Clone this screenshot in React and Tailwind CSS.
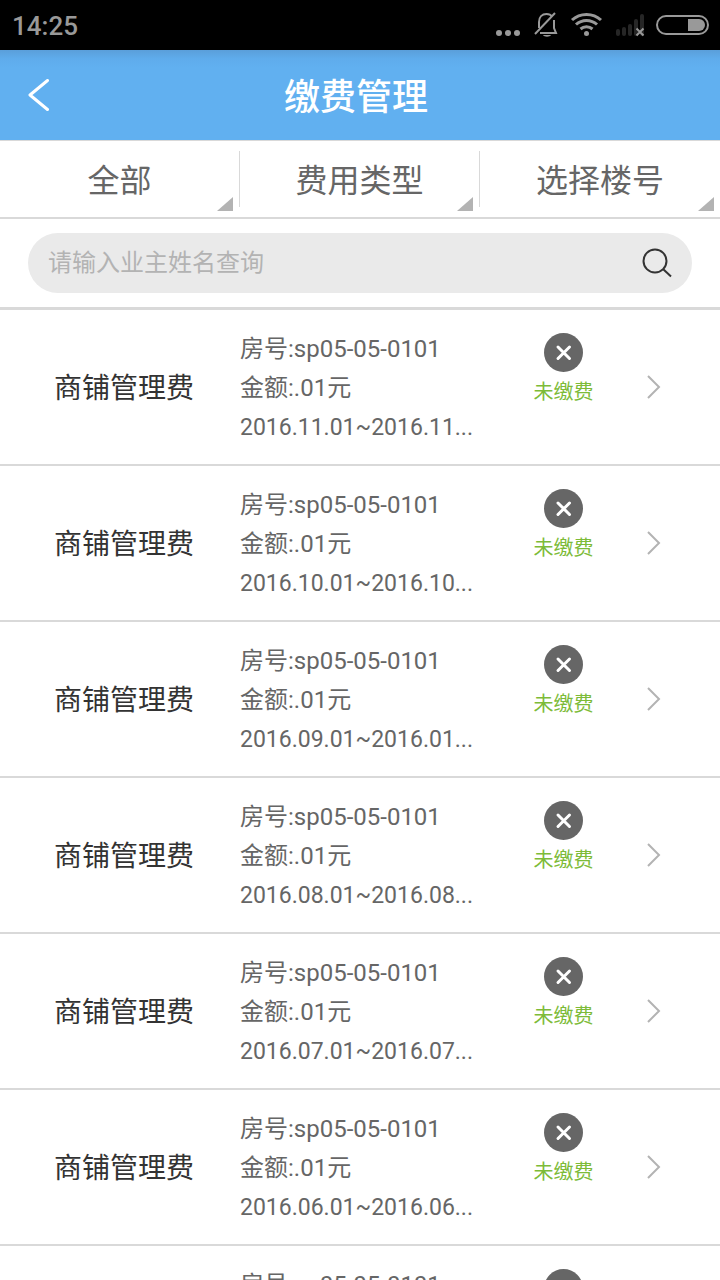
import React, { useState } from 'react';

const FILTERS = [
  { id: 'status', label: '缴费状态', options: ['全部', '已缴费', '未缴费'] },
  { id: 'type', label: '费用类型', options: ['费用类型', '商铺管理费'] },
  { id: 'building', label: '楼号', options: ['选择楼号', 'sp05'] },
];

const BILLS = [
  { id: 1, name: '商铺管理费', room: 'sp05-05-0101', amount: '.01', period: '2016.11.01~2016.11...' },
  { id: 2, name: '商铺管理费', room: 'sp05-05-0101', amount: '.01', period: '2016.10.01~2016.10...' },
  { id: 3, name: '商铺管理费', room: 'sp05-05-0101', amount: '.01', period: '2016.09.01~2016.01...' },
  { id: 4, name: '商铺管理费', room: 'sp05-05-0101', amount: '.01', period: '2016.08.01~2016.08...' },
  { id: 5, name: '商铺管理费', room: 'sp05-05-0101', amount: '.01', period: '2016.07.01~2016.07...' },
  { id: 6, name: '商铺管理费', room: 'sp05-05-0101', amount: '.01', period: '2016.06.01~2016.06...' },
  { id: 7, name: '商铺管理费', room: 'sp05-05-0101', amount: '.01', period: '2016.05.01~2016.05...' },
];

function StatusBar() {
  return (
    <div className="h-[50px] shrink-0 bg-black text-[#999999] flex items-center justify-between pl-3 pr-[11px]">
      <span className="pt-[2px] text-[26px] font-medium">14:25</span>
      {/* dots, muted bell, wifi, no signal, battery */}
      <svg width="213" height="26" viewBox="0 0 213 26" fill="none" aria-hidden="true">
        <g fill="currentColor">
          <circle cx="3" cy="21" r="3" />
          <circle cx="12" cy="21" r="3" />
          <circle cx="21" cy="21" r="3" />
        </g>
        <g stroke="currentColor" strokeWidth="2">
          <path d="M43 16V10C43 5 46 2 50.500 2C53 2 55 3 56 4.500M58 8V16L60 21H44" />
          <path d="M39 22L59 1" />
        </g>
        <path d="M47 23H55C54 25.300 48 25.300 47 23Z" fill="currentColor" />
        <g stroke="currentColor" strokeWidth="3">
          <path d="M76 8C84 0.500 97 0.500 105 8" />
          <path d="M80 12.500C86 7 95 7 101 12.500" />
          <path d="M84.500 17C88 14 93 14 96.500 17" />
        </g>
        <circle cx="90.500" cy="21.500" r="2.500" fill="currentColor" />
        <g fill="#262626">
          <rect x="120" y="17" width="4" height="7" rx="2" />
          <rect x="126" y="15" width="4" height="9" rx="2" />
          <rect x="132" y="12" width="4" height="12" rx="2" />
          <rect x="138" y="7" width="4" height="17" rx="2" />
          <rect x="144" y="2" width="4" height="22" rx="2" />
        </g>
        <path d="M140.500 16.500L147.500 23.500M147.500 16.500L140.500 23.500" stroke="currentColor" strokeWidth="2" />
        <rect x="161" y="4" width="51" height="18" rx="9" stroke="currentColor" strokeWidth="2" />
        <path d="M192 7H203A6 6 0 0 1 203 19H192Z" fill="currentColor" />
      </svg>
    </div>
  );
}

function Header() {
  return (
    <header className="h-[90px] shrink-0 flex items-center bg-[#61b0f0] bg-linear-to-b from-[#5a9fda] via-[#5facec] via-10% to-[#61b0f0] to-20% text-white">
      <button type="button" aria-label="返回" className="w-[72px] h-full pl-7 flex items-center">
        <svg width="22" height="32" viewBox="0 0 22 32" fill="none" stroke="currentColor" strokeWidth="3" strokeLinecap="round" strokeLinejoin="round">
          <path d="M19.500 1.500L2 16L19.500 30.500" />
        </svg>
      </button>
      <h1 className="flex-1 pt-[6px] text-center text-[36px] font-medium">缴费管理</h1>
      <div className="w-20" />
    </header>
  );
}

function FilterTab({ filter, value, onChange, last }) {
  return (
    <div className="relative flex-1 py-[10px]">
      <select
        aria-label={filter.label}
        value={value}
        onChange={(e) => onChange(filter.id, e.target.value)}
        className={`w-full h-14 pt-1 appearance-none bg-transparent text-center text-[32px] text-[#666666] outline-none border-[#d9d9d9] ${last ? '' : 'border-r'}`}
      >
        {filter.options.map((option) => (
          <option key={option}>{option}</option>
        ))}
      </select>
      <svg
        width="16"
        height="14"
        viewBox="0 0 16 14"
        aria-hidden="true"
        className={`absolute bottom-[6px] pointer-events-none ${last ? 'right-[6px]' : 'right-[7px]'}`}
      >
        <path d="M16 0V14H0Z" fill="#b3b3b3" />
      </svg>
    </div>
  );
}

function BillRow({ bill }) {
  return (
    <li className="border-b-2 border-[#d9d9d9]">
      <a href="#" className="flex items-center h-[154px] text-[#666666]">
        <h2 className="w-1/3 pl-2 pt-1 text-center text-[28px] text-[#333333]">{bill.name}</h2>
        <div className="w-1/3 pt-[2px] text-[24px] leading-[39px] whitespace-nowrap">
          <p>房号:{bill.room}</p>
          <p>金额:{bill.amount}元</p>
          <p className="text-[23px] leading-[39px]">{bill.period}</p>
        </div>
        <div className="flex-1 self-start pt-[23px] flex flex-col items-center">
          <svg width="39" height="39" viewBox="0 0 39 39" aria-hidden="true">
            <circle cx="19.500" cy="19.500" r="19.500" fill="#666666" />
            <path d="M14 14L25.500 25.500M25.500 14L14 25.500" stroke="white" strokeWidth="3" strokeLinecap="round" />
          </svg>
          <span className="text-[20px] leading-[40px] text-[#7dbb38]">未缴费</span>
        </div>
        <svg width="14" height="24" viewBox="0 0 14 24" fill="none" stroke="#b3b3b3" strokeWidth="2" aria-hidden="true" className="mr-[59px]">
          <path d="M1 1L12 12L1 23" />
        </svg>
      </a>
    </li>
  );
}

export default function App() {
  const [filters, setFilters] = useState({ status: '全部', type: '费用类型', building: '选择楼号' });
  const [keyword, setKeyword] = useState('');

  const handleFilterChange = (id, value) => {
    setFilters((prev) => ({ ...prev, [id]: value }));
  };

  const bills = BILLS.filter((bill) => !keyword || bill.name.includes(keyword));

  return (
    <div className="h-screen flex flex-col overflow-hidden bg-white font-[Roboto,'Noto_Sans_CJK_SC',sans-serif]">
      <StatusBar />
      <Header />

      {/* Filters */}
      <div className="flex shrink-0 border-t border-b-2 border-[#d9d9d9]">
        {FILTERS.map((filter, i) => (
          <FilterTab
            key={filter.id}
            filter={filter}
            value={filters[filter.id]}
            onChange={handleFilterChange}
            last={i === FILTERS.length - 1}
          />
        ))}
      </div>

      {/* Search */}
      <div className="shrink-0 px-7 py-[14px] border-b-[3px] border-[#d9d9d9]">
        <div className="flex items-center h-[60px] rounded-full bg-[#eaeaea] px-5">
          <input
            type="text"
            aria-label="业主姓名"
            value={keyword}
            onChange={(e) => setKeyword(e.target.value)}
            placeholder="请输入业主姓名查询"
            className="flex-1 min-w-0 bg-transparent text-[24px] text-[#333333] placeholder:text-[#b3b3b3] outline-none"
          />
          <button type="button" aria-label="查询">
            <svg width="30" height="30" viewBox="0 0 30 30" fill="none" stroke="#333333" strokeWidth="2">
              <circle cx="13" cy="13" r="11.500" />
              <path d="M21 21L29 28.500" />
            </svg>
          </button>
        </div>
      </div>

      {/* Bill list */}
      <ul className="flex-1 min-h-0 overflow-y-auto [scrollbar-width:none]">
        {bills.map((bill) => (
          <BillRow key={bill.id} bill={bill} />
        ))}
      </ul>
    </div>
  );
}
